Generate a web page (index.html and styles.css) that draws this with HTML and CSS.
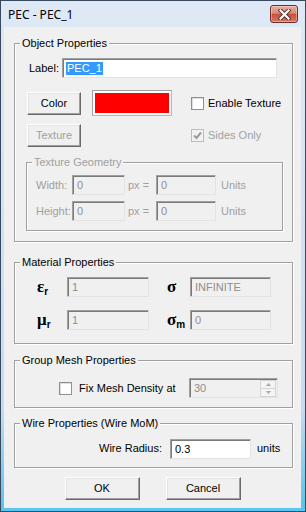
FILE: index.html
```html
<!DOCTYPE html>
<html lang="en">
<head>
  <meta charset="UTF-8">
  <title>PEC - PEC_1</title>
  <link rel="stylesheet" href="styles.css">
</head>
<body>
<div class="window">
  <div class="titlebar">
    <span class="title">PEC - PEC_1</span>
    <button class="close">
      <svg width="13" height="11" viewBox="0 0 13 11">
        <path d="M2.5 1.5 L10.5 9.5 M10.5 1.5 L2.5 9.5" stroke="#4d2a2a" stroke-width="4" stroke-linecap="square"/>
        <path d="M2.5 1.5 L10.5 9.5 M10.5 1.5 L2.5 9.5" stroke="#fff" stroke-width="2.2" stroke-linecap="square"/>
      </svg>
    </button>
  </div>

  <div class="client">

    <fieldset class="group object">
      <legend>Object Properties</legend>
      <div class="body">
        <div class="row label-row">
          <span class="lbl">Label:</span>
          <div class="field label-field"><span class="sel">PEC_1</span></div>
        </div>
        <div class="row color-row">
          <button class="btn small">Color</button>
          <div class="swatch"><div class="red"></div></div>
          <span class="check enable"><span class="box"></span>Enable Texture</span>
        </div>
        <div class="row texture-row">
          <button class="btn small disabled">Texture</button>
          <span class="check sides disabled">
            <span class="box checked">
              <svg width="11" height="11" viewBox="0 0 11 11"><path d="M2 5.5 L4.5 8 L9 2.5" fill="none" stroke="#9a9a9a" stroke-width="2"/></svg>
            </span>Sides Only</span>
        </div>

        <fieldset class="group geometry disabled">
          <legend>Texture Geometry</legend>
          <div class="body">
            <div class="row geo-row">
              <span class="geo-lbl">Width:</span>
              <div class="field disabled w1">0</div>
              <span class="px">px =</span>
              <div class="field disabled w2">0</div>
              <span class="units">Units</span>
            </div>
            <div class="row geo-row second">
              <span class="geo-lbl">Height:</span>
              <div class="field disabled w1">0</div>
              <span class="px">px =</span>
              <div class="field disabled w2">0</div>
              <span class="units">Units</span>
            </div>
          </div>
        </fieldset>
      </div>
    </fieldset>

    <fieldset class="group material">
      <legend>Material Properties</legend>
      <div class="body">
        <div class="row mat-row">
          <span class="sym s1">&epsilon;<sub>r</sub></span>
          <div class="field disabled m1">1</div>
          <span class="sym s2">&sigma;</span>
          <div class="field disabled m2">INFINITE</div>
        </div>
        <div class="row mat-row second">
          <span class="sym s1">&mu;<sub>r</sub></span>
          <div class="field disabled m1">1</div>
          <span class="sym s2">&sigma;<sub>m</sub></span>
          <div class="field disabled m2">0</div>
        </div>
      </div>
    </fieldset>

    <fieldset class="group mesh">
      <legend>Group Mesh Properties</legend>
      <div class="body">
        <div class="row mesh-row">
          <span class="check fix"><span class="box"></span>Fix Mesh Density at</span>
          <div class="field disabled spin">
            <span>30</span>
            <span class="spin-btns">
              <span class="spin-up"><svg width="5" height="3" viewBox="0 0 5 3"><path d="M0 3 L2.5 0 L5 3 Z" fill="#a8a8a8"/></svg></span>
              <span class="spin-down"><svg width="5" height="3" viewBox="0 0 5 3"><path d="M0 0 L2.5 3 L5 0 Z" fill="#a8a8a8"/></svg></span>
            </span>
          </div>
        </div>
      </div>
    </fieldset>

    <fieldset class="group wire">
      <legend>Wire Properties (Wire MoM)</legend>
      <div class="body">
        <div class="row wire-row">
          <span class="wire-lbl">Wire Radius:</span>
          <div class="field radius">0.3</div>
          <span class="wire-units">units</span>
        </div>
      </div>
    </fieldset>

    <div class="actions">
      <button class="btn action">OK</button>
      <button class="btn action">Cancel</button>
    </div>

  </div>
</div>
</body>
</html>
```

FILE: styles.css
```css
body {
  margin: 0;
  background: #fff;
}

.window {
  width: 306px;
  height: 512px;
  box-sizing: border-box;
  border: 1px solid #3a4a5e;
  background: linear-gradient(#dfe9f6, #c6dbf0 80%, #5cc4ee 99%);
  display: flex;
  flex-direction: column;
  font-family: "Liberation Sans", Arial, sans-serif;
  font-size: 11px;
  line-height: 13px;
  color: #000;
}

/* title bar */
.titlebar {
  height: 26px;
  flex: none;
  display: flex;
  align-items: center;
  padding-left: 7px;
}
.title {
  flex: 1;
  font-family: "Noto Sans", sans-serif;
  font-size: 12px;
}
.close {
  align-self: flex-start;
  margin: 4px 7px 0 0;
  width: 28px;
  height: 18px;
  padding: 0;
  border: 1px solid #6b2d2d;
  border-radius: 3px;
  background: linear-gradient(#e8ad9f, #d98a79 45%, #c9503b 52%, #d8775f);
  box-shadow: inset 0 0 0 1px rgba(255,255,255,0.35);
  display: flex;
  align-items: center;
  justify-content: center;
}

/* client area */
.client {
  flex: 1;
  margin: 0 4px 3px 3px;
  background: #f0f0f0;
  padding: 10px 8px 0 10px;
  display: flex;
  flex-direction: column;
}

/* group boxes */
.group {
  margin: 0;
  padding: 0;
  min-width: 0;
  border: 1px solid #a0a0a0;
  box-shadow: inset 1px 1px 0 #fff, 1px 1px 0 #fff;
}
.group legend {
  margin-left: 5px;
  padding: 0 2px;
  height: 13px;
  line-height: 13px;
  background: #f0f0f0;
}
.group.disabled legend,
.disabled {
  color: #a0a0a0;
}

.row {
  display: flex;
  align-items: center;
}

/* inputs */
.field {
  box-sizing: border-box;
  height: 20px;
  border: 1px solid;
  border-color: #a0a0a0 #e3e3e3 #e3e3e3 #a0a0a0;
  box-shadow: inset 1px 1px 0 #7a7a7a;
  background: #fff;
  padding: 1px 3px 0 4px;
  display: flex;
  align-items: center;
  white-space: nowrap;
}
.field.disabled {
  background: #f0f0f0;
  color: #8e8e8e;
}
.sel {
  background: #3399ff;
  color: #fff;
  padding: 0 1px;
  margin-left: -1px;
}

/* buttons */
.btn {
  box-sizing: border-box;
  height: 23px;
  padding: 0;
  border: 1px solid;
  border-color: #fff #696969 #696969 #fff;
  box-shadow: inset -1px -1px 0 #a0a0a0, inset 1px 1px 0 #e3e3e3;
  background: #f0f0f0;
  font: inherit;
  color: #000;
}
.btn.disabled {
  color: #a0a0a0;
}

/* checkboxes */
.check {
  display: flex;
  align-items: center;
  white-space: nowrap;
}
.box {
  box-sizing: border-box;
  width: 13px;
  height: 13px;
  border: 1px solid #8e8f8f;
  background: #fff;
  box-shadow: inset 1px 1px 0 #dedede;
  margin-right: 4px;
  display: flex;
  align-items: center;
  justify-content: center;
}
.box.checked {
  border-color: #bdbdbd;
  background: #f2f2f2;
  box-shadow: none;
}

/* object properties */
.object > .body {
  padding: 0 9px 10px 11px;
}
.label-row {
  margin-top: 8px;
}
.lbl {
  width: 33px;
  margin-left: 3px;
}
.label-field {
  width: 215px;
}
.color-row {
  margin-top: 12px;
  height: 26px;
}
.btn.small {
  width: 54px;
  margin-left: 1px;
}
.swatch {
  box-sizing: border-box;
  width: 80px;
  height: 26px;
  margin-left: 11px;
  border: 1px solid;
  border-color: #a0a0a0 #b9b9b9 #b9b9b9 #a0a0a0;
  padding: 2px;
  background: #fff;
}
.red {
  height: 100%;
  background: #ff0000;
}
.enable {
  margin-left: 19px;
}
.texture-row {
  margin-top: 8px;
}
.sides {
  margin-left: 110px;
}

/* texture geometry */
.geometry {
  margin-top: 9px;
}
.geometry > .body {
  padding: 6px 0 9px 9px;
}
.geo-row {
  height: 20px;
}
.geo-row.second {
  margin-top: 6px;
}
.geo-lbl {
  width: 36px;
}
.w1 {
  width: 53px;
}
.px {
  width: 28px;
  padding-left: 3px;
}
.w2 {
  width: 60px;
}
.units {
  margin-left: 5px;
}

/* material properties */
.material {
  margin-top: 14px;
}
.material > .body {
  padding: 8px 0 13px 22px;
}
.mat-row {
  height: 20px;
}
.mat-row.second {
  margin-top: 13px;
}
.sym {
  font-family: "Liberation Serif", serif;
  font-weight: bold;
  font-size: 17px;
  line-height: 20px;
}
.sym sub {
  font-family: "Liberation Sans", Arial, sans-serif;
  font-size: 10px;
  vertical-align: -3px;
  line-height: 0;
}
.s1 {
  width: 30px;
}
.s2 {
  width: 23px;
  margin-left: 18px;
}
.m1 {
  width: 82px;
}
.m2 {
  width: 81px;
}

/* mesh */
.mesh {
  margin-top: 10px;
}
.mesh > .body {
  padding: 11px 0 9px 44px;
}
.fix {
  width: 130px;
}
.fix .box {
  margin-right: 7px;
}
.spin {
  width: 89px;
  padding-right: 1px;
}
.spin span:first-child {
  flex: 1;
}
.spin-btns {
  display: flex;
  flex-direction: column;
  width: 16px;
  height: 17px;
}
.spin-up,
.spin-down {
  flex: 1;
  box-sizing: border-box;
  border: 1px solid #d4d4d4;
  background: #f4f4f4;
  display: flex;
  align-items: center;
  justify-content: center;
}
.spin-down {
  border-top: none;
}

/* wire */
.wire {
  margin-top: 9px;
}
.wire > .body {
  padding: 8px 0 8px 0;
}
.wire-row {
  height: 21px;
}
.wire-lbl {
  width: 147px;
  text-align: right;
}
.radius {
  width: 81px;
  margin-left: 8px;
}
.wire-units {
  margin-left: 6px;
}

/* buttons */
.actions {
  margin-top: 9px;
  display: flex;
  justify-content: center;
  gap: 26px;
  padding-right: 2px;
}
.btn.action {
  width: 75px;
}
```
